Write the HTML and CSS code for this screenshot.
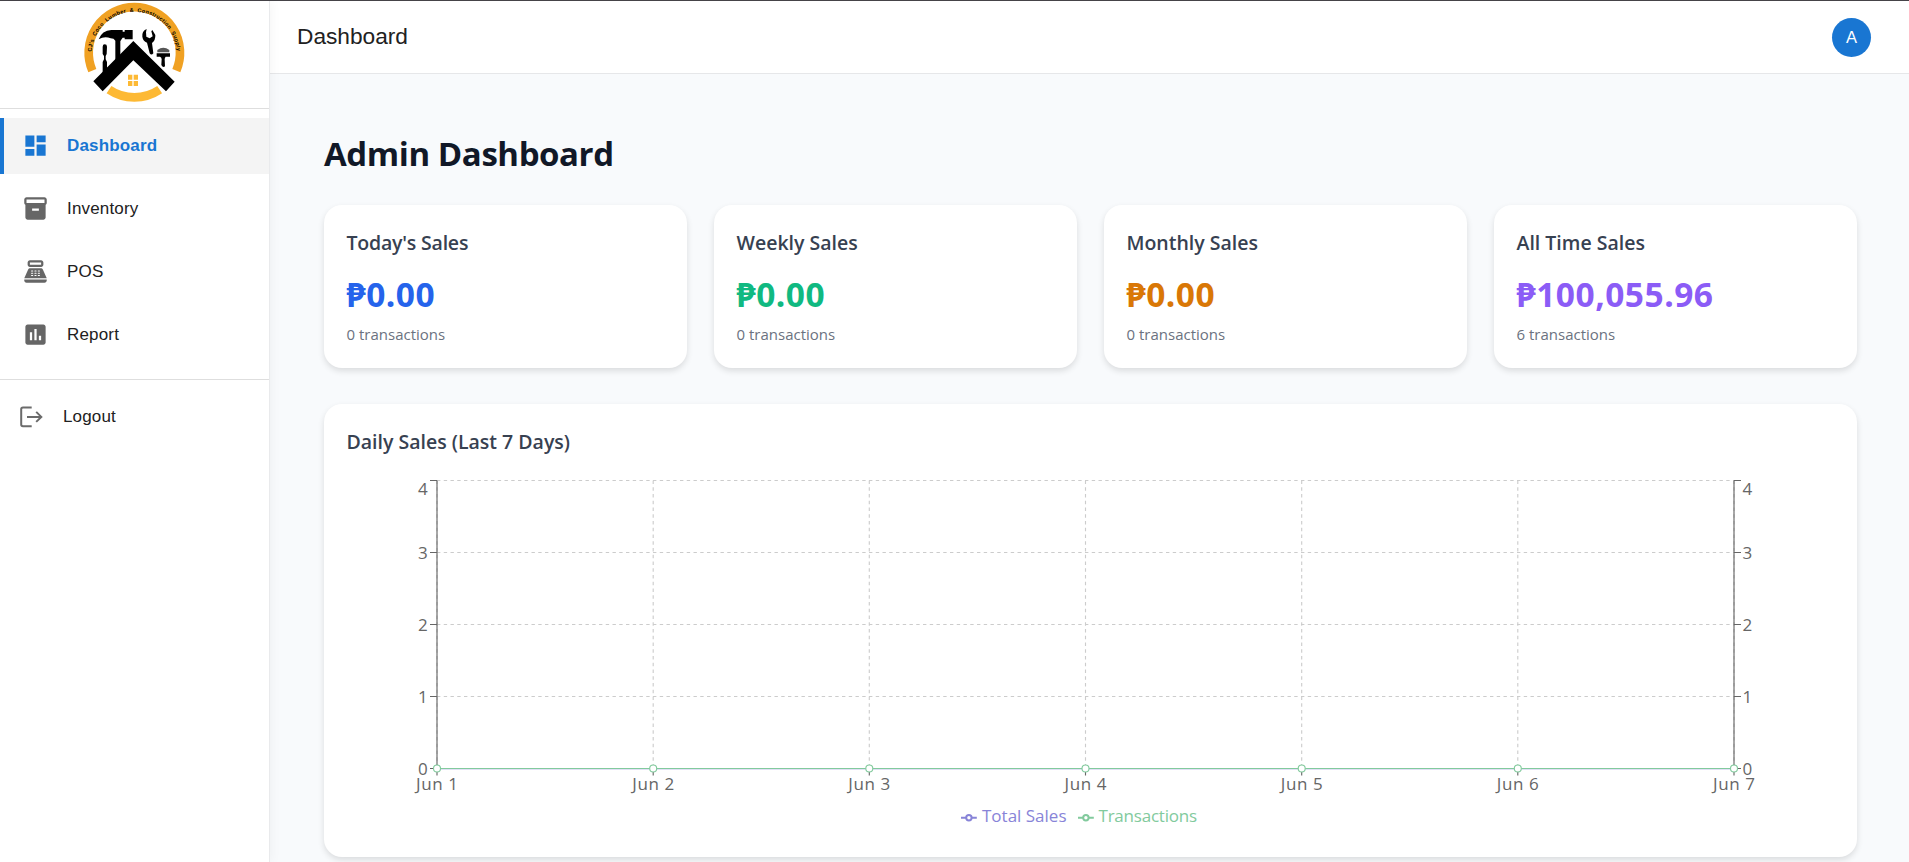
FILE: index.html
```html
<!DOCTYPE html>
<html lang="en">
<head>
<meta charset="utf-8">
<title>Dashboard</title>
<link rel="stylesheet" href="styles.css">
</head>
<body>
<div class="app">
  <aside class="sidebar">
    <div class="brand">
      <svg class="logo" viewBox="0 0 390 324" width="130" height="108">
        <defs><path id="ring-text" d="M64.500 164A128.500 128.500 0 0 1 321.500 164"/></defs>
        <path d="M67 212A137 137 0 1 1 319 212" fill="none" stroke="#f0a123" stroke-width="26"/>
        <path d="M117 269A136 136 0 0 0 269 269" fill="none" stroke="#fdb934" stroke-width="26"/>
        <text class="logo-text"><textPath href="#ring-text" startOffset="9" textLength="384">CJ's Coco Lumber &amp; Construction Supply</textPath></text>
        <path d="M86 118Q96 91 124 90H158V95H164V90H188V118H164V113H158Q153 119 151 124V170L136 186V122Q132 115 122 115Q104 107 86 118Z"/>
        <path d="M98 140Q98 133 104 133Q111 133 111 140L110 162L107 168V178L111 186V206L98 220V186L102 178V168L98 162Z"/>
        <path d="M230 87Q215 94 217 110Q219 123 231 128L239 160Q244 167 250 160L246 129Q257 120 256 105L247 90L244 94L248 109L239 115L229 110L228 97Z"/>
        <path d="M262 150Q280 137 298 150V157H262Z" fill="#555"/><path d="M260 160H300V170H287Q284 173 284 178L285 199Q279 205 274 195L275 178Q275 172 270 170H260Z"/>
        <path d="M190 123L314 245L288 274L190 181L98 274L70 244Z"/>
        <path d="M174 224h13v15h-13zM191 224h13v15h-13zM174 243h13v15h-13zM191 243h13v15h-13z" fill="#fdb934"/>
      </svg>
    </div>
    <nav class="nav">
      <a class="item active"><svg class="ico" viewBox="0 0 24 24"><path d="M3 13h8V3H3v10zm0 8h8v-6H3v6zm10 0h8V11h-8v10zm0-18v6h8V3h-8z"/></svg><span>Dashboard</span></a>
      <a class="item"><svg class="ico" viewBox="0 0 24 24"><path d="M20 2H4c-1 0-2 .9-2 2v3.010c0 .72.430 1.340 1 1.690V20c0 1.100 1.100 2 2 2h14c.9 0 2-.9 2-2V8.700c.570-.35 1-.97 1-1.690V4c0-1.100-1-2-2-2m-5 12H9v-2h6zm5-7H4V4h16z"/></svg><span>Inventory</span></a>
      <a class="item"><svg class="ico" viewBox="0 0 24 24"><path d="M17 2H7c-1.100 0-2 .9-2 2v2c0 1.100.9 2 2 2h10c1.100 0 2-.9 2-2V4c0-1.100-.9-2-2-2m0 4H7V4h10zm3 16H4c-1.100 0-2-.9-2-2v-1h20v1c0 1.100-.9 2-2 2m-1.470-11.810C18.210 9.470 17.490 9 16.700 9H7.300c-.79 0-1.510.470-1.830 1.190L2 18h20zM9.500 16h-1c-.28 0-.5-.22-.5-.5s.220-.5.5-.5h1c.28 0 .5.220.5.5s-.22.5-.5.5m0-2h-1c-.28 0-.5-.22-.5-.5s.220-.5.5-.5h1c.28 0 .5.220.5.5s-.22.5-.5.5m0-2h-1c-.28 0-.5-.22-.5-.5s.220-.5.5-.5h1c.28 0 .5.220.5.5s-.22.5-.5.5m3 4h-1c-.28 0-.5-.22-.5-.5s.220-.5.5-.5h1c.28 0 .5.220.5.5s-.22.5-.5.5m0-2h-1c-.28 0-.5-.22-.5-.5s.220-.5.5-.5h1c.28 0 .5.220.5.5s-.22.5-.5.5m0-2h-1c-.28 0-.5-.22-.5-.5s.220-.5.5-.5h1c.28 0 .5.220.5.5s-.22.5-.5.5m3 4h-1c-.28 0-.5-.22-.5-.5s.220-.5.5-.5h1c.28 0 .5.220.5.5s-.22.5-.5.5m0-2h-1c-.28 0-.5-.22-.5-.5s.220-.5.5-.5h1c.28 0 .5.220.5.5s-.22.5-.5.5m0-2h-1c-.28 0-.5-.22-.5-.5s.220-.5.5-.5h1c.28 0 .5.220.5.5s-.22.5-.5.5"/></svg><span>POS</span></a>
      <a class="item"><svg class="ico" viewBox="0 0 24 24"><path d="M19 3H5c-1.100 0-2 .9-2 2v14c0 1.100.9 2 2 2h14c1.100 0 2-.9 2-2V5c0-1.100-.9-2-2-2zM9 17H7v-7h2v7zm4 0h-2V7h2v10zm4 0h-2v-4h2v4z"/></svg><span>Report</span></a>
    </nav>
    <a class="logout"><svg class="ico line" viewBox="0 0 27 27"><path d="M13.700 4.500H5Q3.200 4.500 3.200 6.300V21.500Q3.200 23.300 5 23.300H13.700M9 13.900H23.500M18.200 8.900L23.300 13.900L18.200 18.900"/></svg><span>Logout</span></a>
  </aside>
  <div class="page">
    <header class="topbar"><span class="page-name">Dashboard</span><span class="avatar">A</span></header>
    <main class="content">
      <h1>Admin Dashboard</h1>
      <section class="stats">
        <article class="card"><h2 class="tight">Today's Sales</h2><p class="value blue">₱0.00</p><p class="sub">0 transactions</p></article>
        <article class="card"><h2>Weekly Sales</h2><p class="value green">₱0.00</p><p class="sub">0 transactions</p></article>
        <article class="card"><h2>Monthly Sales</h2><p class="value amber">₱0.00</p><p class="sub">0 transactions</p></article>
        <article class="card"><h2>All Time Sales</h2><p class="value violet">₱100,055.96</p><p class="sub">6 transactions</p></article>
      </section>
      <section class="card chart-card">
        <h2>Daily Sales (Last 7 Days)</h2>
        <svg class="chart" viewBox="347 470 1487 365" width="1487" height="365">
          <g class="grid">
            <path d="M437 480.500H1734M437 552.500H1734M437 624.500H1734M437 696.500H1734M437 768.500H1734"/>
            <path d="M437 480.500V768.500M653.200 480.500V768.500M869.300 480.500V768.500M1085.500 480.500V768.500M1301.700 480.500V768.500M1517.800 480.500V768.500M1734 480.500V768.500"/>
          </g>
          <g class="axis">
            <path d="M437 480.500V768.500M430 480.500h7M430 552.500h7M430 624.500h7M430 696.500h7M430 768.500h7"/>
            <path d="M1734 480.500V768.500M1734 480.500h7M1734 552.500h7M1734 624.500h7M1734 696.500h7M1734 768.500h7"/>
            <path d="M437 768.500H1734M437 768.500v7M653.200 768.500v7M869.300 768.500v7M1085.500 768.500v7M1301.700 768.500v7M1517.800 768.500v7M1734 768.500v7"/>
          </g>
          <g class="tick end"><text x="427.700" y="495">4</text><text x="427.700" y="559">3</text><text x="427.700" y="631">2</text><text x="427.700" y="703">1</text><text x="427.700" y="775">0</text></g>
          <g class="tick"><text x="1742.500" y="495">4</text><text x="1742.500" y="559">3</text><text x="1742.500" y="631">2</text><text x="1742.500" y="703">1</text><text x="1742.500" y="775">0</text></g>
          <g class="tick mid"><text x="437" y="790" textLength="42">Jun 1</text><text x="653.200" y="790" textLength="42">Jun 2</text><text x="869.300" y="790" textLength="42">Jun 3</text><text x="1085.500" y="790" textLength="42">Jun 4</text><text x="1301.700" y="790" textLength="42">Jun 5</text><text x="1517.800" y="790" textLength="42">Jun 6</text><text x="1734" y="790" textLength="42">Jun 7</text></g>
          <path class="sales" d="M437 768.700H1734"/>
          <path class="trans" d="M437 768.500H1734"/>
          <g class="dots"><circle cx="437" cy="768.500" r="3.500"/><circle cx="653.200" cy="768.500" r="3.500"/><circle cx="869.300" cy="768.500" r="3.500"/><circle cx="1085.500" cy="768.500" r="3.500"/><circle cx="1301.700" cy="768.500" r="3.500"/><circle cx="1517.800" cy="768.500" r="3.500"/><circle cx="1734" cy="768.500" r="3.500"/></g>
          <g class="legend sales"><path d="M961 817.700h5.200M971.600 817.700h5.200"/><circle cx="968.900" cy="817.700" r="2.700"/><text x="982" y="822" textLength="84.500">Total Sales</text></g>
          <g class="legend trans"><path d="M1078 817.700h5.200M1088.600 817.700h5.200"/><circle cx="1085.900" cy="817.700" r="2.700"/><text x="1098.500" y="822" textLength="98.500">Transactions</text></g>
        </svg>
      </section>
    </main>
  </div>
</div>
</body>
</html>
```
FILE: styles.css
```css
* { box-sizing: border-box; }
body { margin: 0; height: 862px; overflow: hidden; background: #f8fafc; font-family: "Open Sans", "Noto Sans", sans-serif; }
h1, h2, p { margin: 0; }
.app { display: flex; height: 862px; border-top: 1px solid #454348; }
.sidebar { width: 270px; flex: none; background: #fff; border-right: 1px solid #e9eaec; box-shadow: 2px 0 10px rgba(0,0,0,.04); z-index: 1; font: 17px "Liberation Sans", Arial, sans-serif; letter-spacing: .17px; color: #212121; }
.sidebar span { padding-top: 2px; }
.brand { height: 108px; display: flex; padding-left: 70px; border-bottom: 1px solid #dedede; }
.logo { display: block; margin-top: -1px; }
.logo-text { font: bold 16.5px "Liberation Sans", Arial, sans-serif; letter-spacing: 0; word-spacing: 5px; }
.nav { height: 271px; padding-top: 9px; display: flex; flex-direction: column; gap: 7px; border-bottom: 1px solid #dedede; }
.item { height: 56px; display: flex; align-items: center; gap: 18px; padding: 0 0 2px 22px; }
.active { background: #f4f4f4; border-left: 4px solid #1976d2; padding-left: 18px; color: #1976d2; font-weight: 700; }
.ico { width: 27px; height: 27px; fill: #666; }
.active .ico { fill: #1976d2; }
.line { fill: none; stroke: #6b6b6b; stroke-width: 2; }
.logout { height: 72px; display: flex; align-items: center; gap: 18px; padding-left: 18px; }
.page { flex: 1; min-width: 0; }
.topbar { height: 73px; display: flex; align-items: center; justify-content: space-between; padding: 0 38px 0 27px; background: #fff; border-bottom: 1px solid #e6e7e9; font-family: "Liberation Sans", Arial, sans-serif; color: #212121; }
.page-name { font-size: 22.700px; line-height: 26px; padding-bottom: 2px; }
.avatar { width: 39px; height: 39px; border-radius: 50%; background: #1976d2; color: #fff; display: grid; place-items: center; font-size: 16.500px; }
.content { padding: 54px 52px 0 54px; }
h1 { height: 77px; font-size: 33px; line-height: 52px; font-weight: 700; letter-spacing: -.42px; color: #111827; }
.stats { display: grid; grid-template-columns: repeat(4, 1fr); gap: 27px; }
.card { height: 163px; padding: 22px 23px; background: #fff; border-radius: 18px; box-shadow: 0 3px 6px rgba(0,0,0,.12); }
h2 { font-size: 19.5px; line-height: 32px; font-weight: 600; color: #374151; margin-left: -.5px; }
.tight { letter-spacing: -.2px; }
.value { font-size: 33.5px; line-height: 52px; margin: 9px 0 0 -.5px; font-weight: 700; letter-spacing: .5px; }
.sub { font-size: 15px; line-height: 24px; margin: 2px 0 0 -.5px; color: #6b7280; }
.blue { color: #2563eb; } .green { color: #10b981; } .amber { color: #d97706; } .violet { color: #8b5cf6; }
.chart-card { height: 453px; margin-top: 36px; }
.chart { display: block; margin-top: 12px; }
.grid { fill: none; stroke: #ccc; stroke-width: 1.125; stroke-dasharray: 3.375 3.375; }
.axis { fill: none; stroke: #666; stroke-width: 1.125; }
.tick { font-size: 17px; fill: #666; }
.end { text-anchor: end; }
.mid { text-anchor: middle; }
.sales { stroke: #8884d8; stroke-width: 1.125; }
.trans { stroke: #82ca9d; stroke-width: 1.125; }
.dots { fill: #fff; stroke: #82ca9d; stroke-width: 1.125; }
.legend { font-size: 17px; fill: none; stroke-width: 2; }
.legend text { stroke: none; }
.legend.sales text { fill: #8884d8; }
.legend.trans text { fill: #82ca9d; }
```
